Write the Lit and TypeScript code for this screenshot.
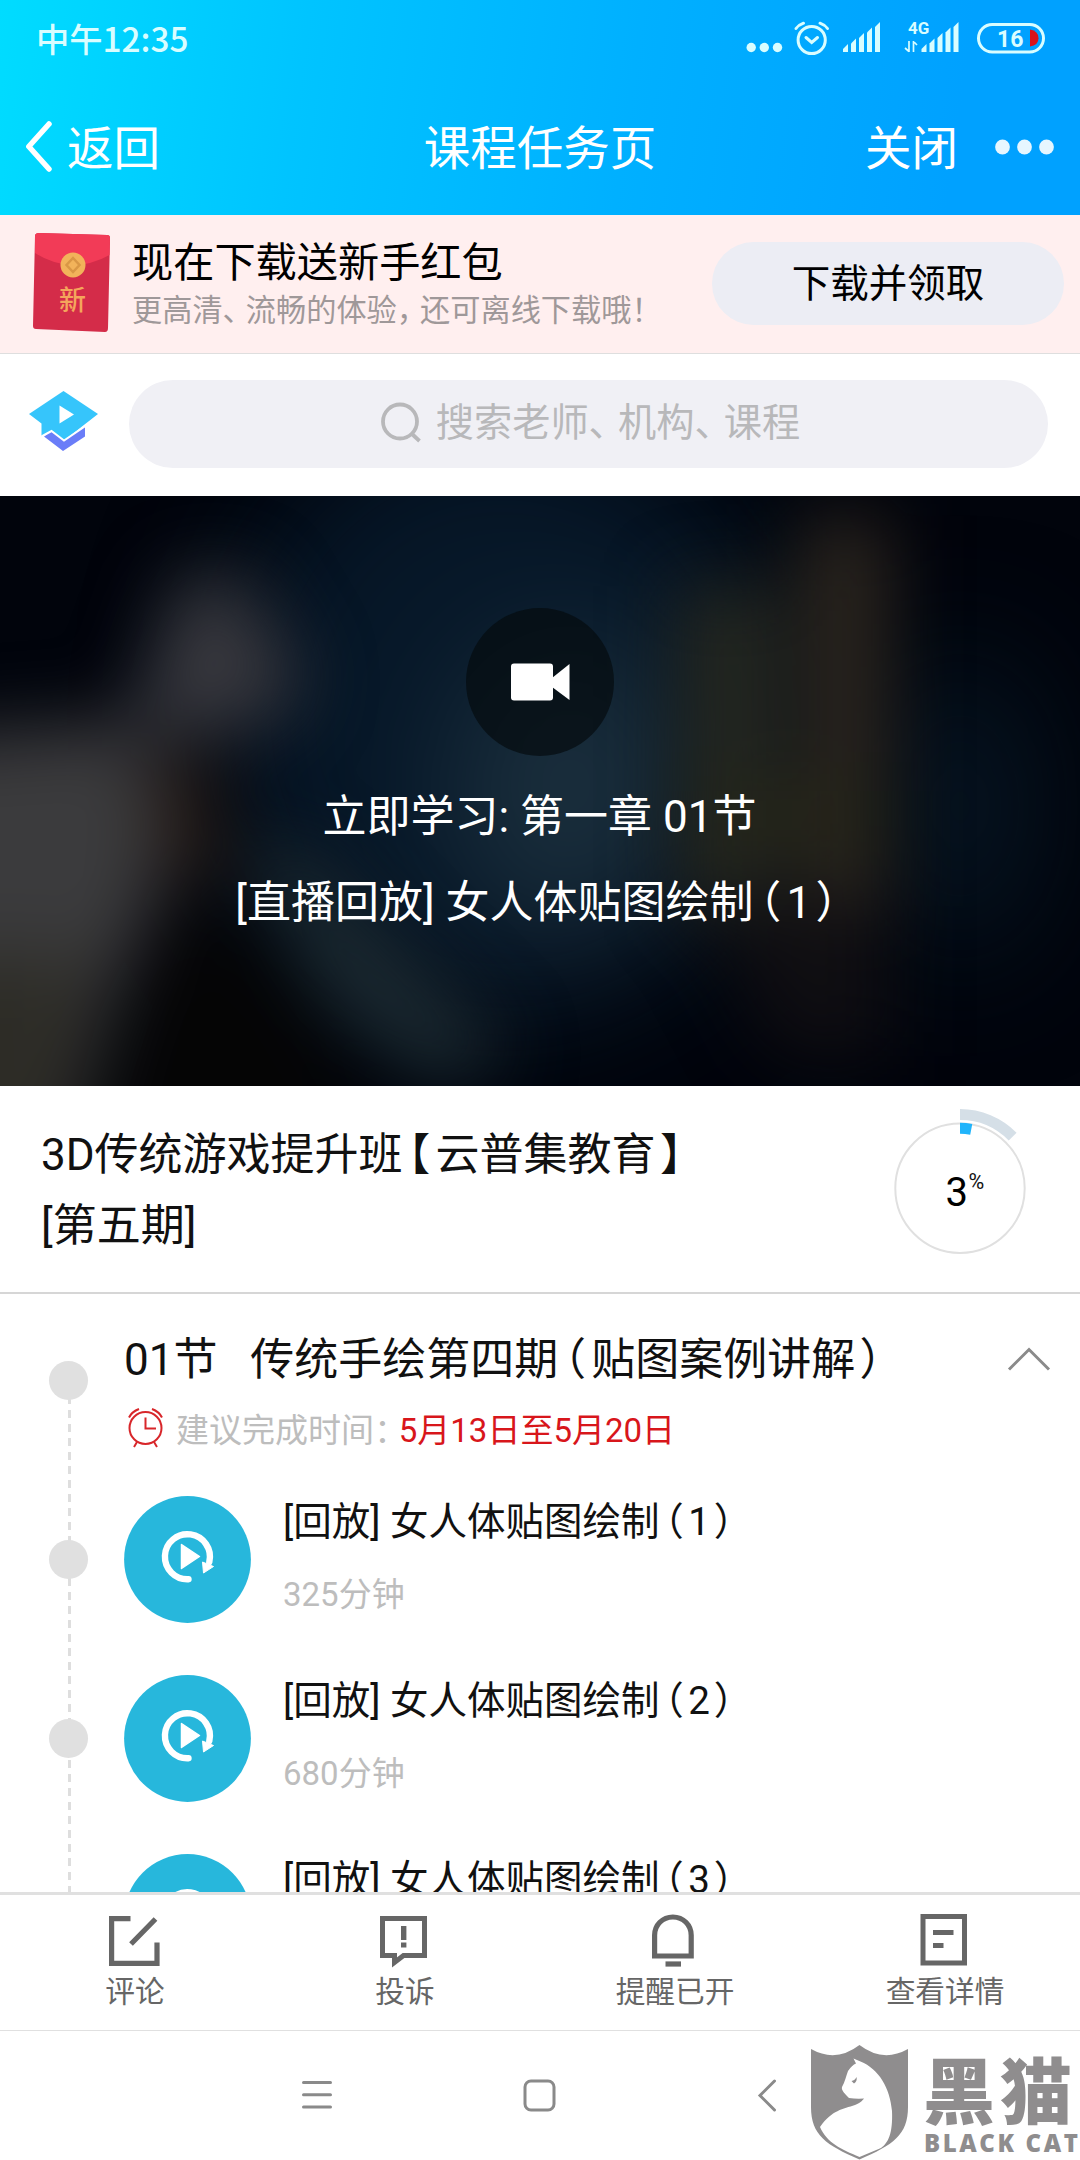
import { LitElement, html, css, svg, TemplateResult } from 'lit';
import { property, customElement, state } from 'lit/decorators.js';
import { classMap } from 'lit/directives/class-map.js';

interface Lesson {
  title: string;
  minutes: number;
}

interface Tab {
  label: string;
  icon: TemplateResult;
}

// Full-width punctuation is set tighter than one em, as on the phone
const PUNCT = /([、，：！（）【】])/;

function cjk(text: string) {
  return text.split(PUNCT).map((part) => {
    if (!PUNCT.test(part)) {
      return part;
    }
    const classes = {
      p: true,
      open: '（【'.includes(part),
      close: '）】'.includes(part),
      colon: part === '：',
    };
    return html`<span class=${classMap(classes)}>${part}</span>`;
  });
}

const punctuation = css`
  .p {
    margin-right: -0.23em;
  }

  .p.open {
    margin-left: -0.37em;
    margin-right: 0.12em;
  }

  .p.close {
    margin-left: 0.1em;
    margin-right: -0.36em;
  }

  .p.colon {
    margin-left: 0.01em;
    margin-right: -0.26em;
  }
`;

const editIcon = html`
  <svg width="52" height="54" viewBox="0 0 52 54" fill="none" stroke="currentColor" stroke-width="5.2">
    <path d="M21.5 4.6H2.6V49.4H48V28.5M22 30L46.5 5" />
  </svg>
`;

const complainIcon = html`
  <svg width="52" height="54" viewBox="0 0 52 54" fill="none" stroke="currentColor" stroke-width="5">
    <path d="M3.5 4.5H45.5V41.5H24.5L15.5 48.5V41.5H3.5Z" />
    <path d="M24.7 12V26M24.7 28.5V33.5" stroke-width="5.4" />
  </svg>
`;

const bellIcon = html`
  <svg width="52" height="54" viewBox="0 0 52 54" fill="none" stroke="currentColor" stroke-width="5.2">
    <path d="M5.6 42V21.3C5.6 11 13.5 3 23.9 3S42.2 11 42.2 21.3V42Z" />
    <path d="M16.5 50H32" />
  </svg>
`;

const detailIcon = html`
  <svg width="52" height="54" viewBox="0 0 52 54" fill="none" stroke="currentColor" stroke-width="5">
    <path d="M4 2.5H45.5V49H4ZM14 18.5H34.5M14 31.5H24.5" />
  </svg>
`;

/**
 * One replay lesson in the course outline
 * @element lesson-row
 *
 * @prop {string} heading - Lesson title
 * @prop {number} minutes - Duration in minutes
 */
@customElement('lesson-row')
export class LessonRow extends LitElement {
  static override styles = [punctuation, css`
    :host {
      display: flex;
      align-items: flex-start;
      height: 179px;
    }

    .dot {
      width: 39px;
      height: 39px;
      margin: 44px 36px 0 49px;
      border-radius: 50%;
      background: #e0e0e0;
    }

    .play {
      width: 127px;
      height: 127px;
      margin-right: 32px;
    }

    .heading {
      margin-top: 1px;
      font-size: 38.5px;
      line-height: 50px;
      color: #111;
      white-space: nowrap;
    }

    .minutes {
      margin-top: 23px;
      font-size: 33px;
      line-height: 50px;
      color: #bdbdbd;
    }
  `];

  @property({ type: String })
  heading = '';

  @property({ type: Number })
  minutes = 0;

  override render() {
    return html`
      <span class="dot"></span>
      <svg class="play" viewBox="0 0 127 127">
        <circle cx="63.5" cy="63.5" r="63.4" fill="#27b7dc" />
        <path d="M64.5 83.2A22.5 22.5 0 1 1 85.3 66" fill="none" stroke="#fff" stroke-width="6.4" stroke-linecap="round" />
        <path d="M78.5 66L89.5 70.5L79.5 77Z" fill="#fff" stroke="#fff" stroke-width="1" />
        <path d="M57.5 48.5L75.5 60.5L57.5 72.5Z" fill="#fff" stroke="#fff" stroke-width="1.5" stroke-linejoin="round" />
      </svg>
      <div>
        <div class="heading">${cjk(this.heading)}</div>
        <div class="minutes">${this.minutes}分钟</div>
      </div>
    `;
  }
}

@customElement('app-root')
export class AppRoot extends LitElement {
  static override styles = [punctuation, css`
    :host {
      display: flex;
      flex-direction: column;
      position: relative;
      width: 1080px;
      height: 2160px;
      overflow: hidden;
      background: #fff;
      color: #111;
      font-family: Roboto, 'Noto Sans CJK SC', sans-serif;
    }

    svg {
      display: block;
      flex: none;
    }

    /* Header */
    .top {
      flex: none;
      height: 215px;
      color: #fff;
      background: linear-gradient(98deg, #00dcff 0%, #00c4ff 28%, #00b0ff 58%, #00a1ff 88%);
    }

    .status {
      display: flex;
      justify-content: space-between;
      align-items: center;
      height: 78px;
      padding: 0 32px 0 36px;
      color: #d9fdff;
    }

    .clock {
      padding-bottom: 3px;
      font-family: 'Noto Sans CJK SC', sans-serif;
      font-weight: 500;
      font-size: 33.3px;
    }

    .nav {
      display: grid;
      grid-template-columns: 1fr auto 1fr;
      align-items: center;
      height: 137px;
      padding: 0 26px;
      font-size: 46.5px;
    }

    .label {
      padding-bottom: 5px;
    }

    .back,
    .actions {
      display: flex;
      align-items: center;
    }

    .back {
      gap: 13px;
    }

    .actions {
      justify-content: flex-end;
      gap: 36px;
    }

    /* Download promo */
    .promo {
      display: flex;
      flex: none;
      align-items: center;
      box-sizing: border-box;
      height: 139px;
      padding: 0 16px 4px 32px;
      border-bottom: 1px solid #dedede;
      background: #ffefef;
    }

    .promo-text {
      flex: 1;
      margin: 4px 0 0 21px;
      white-space: nowrap;
    }

    .promo-title {
      font-size: 41.2px;
      line-height: 54px;
      color: #000;
    }

    .promo-sub {
      font-size: 30.2px;
      line-height: 42px;
      color: #9f9899;
    }

    .promo-button {
      width: 352px;
      height: 83px;
      margin-top: 3px;
      padding: 0 0 8px;
      border: 0;
      border-radius: 42px;
      background: #ecedf4;
      color: #000;
      font: inherit;
      font-size: 38.5px;
    }

    /* Search */
    .search {
      display: flex;
      flex: none;
      align-items: center;
      box-sizing: border-box;
      height: 142px;
      padding: 0 32px 3px 28px;
      gap: 30px;
    }

    .logo {
      margin-bottom: 5px;
    }

    .search-box {
      display: flex;
      flex: 1;
      align-items: center;
      justify-content: center;
      height: 88px;
      gap: 14px;
      padding: 0 0 3px 3px;
      box-sizing: border-box;
      border-radius: 44px;
      background: #f0f0f5;
      color: #b8b8ba;
      font-size: 38.2px;
    }

    /* Player */
    .player {
      display: grid;
      flex: none;
      height: 590px;
      overflow: hidden;
      background: #01040c;
    }

    .player > * {
      grid-area: 1 / 1;
    }

    .player-body {
      display: flex;
      flex-direction: column;
      align-items: center;
      z-index: 1;
      padding: 112px 1px 0 0;
      color: #fff;
      font-size: 44px;
      line-height: 60px;
      white-space: nowrap;
    }

    .camera {
      display: flex;
      align-items: center;
      justify-content: center;
      width: 148px;
      height: 148px;
      margin-bottom: 31px;
      border-radius: 50%;
      background: rgba(4, 10, 14, 0.68);
    }

    .player-title {
      margin-top: 26px;
    }

    /* Course */
    .course {
      display: flex;
      flex: none;
      justify-content: space-between;
      box-sizing: border-box;
      height: 208px;
      padding: 0 40px 0 41px;
      border-bottom: 2px solid #d6d6d6;
    }

    .course-title {
      margin: 34px 0 0;
      font-size: 44px;
      font-weight: 400;
      line-height: 71px;
      white-space: nowrap;
    }

    .progress {
      margin-top: 15px;
    }

    /* Outline */
    .outline {
      flex: none;
      height: 598px;
      overflow: hidden;
      background: repeating-linear-gradient(#dedede 0 8px, transparent 8px 14px) 68px 88px / 3px 510px no-repeat;
    }

    .section {
      display: flex;
      align-items: flex-start;
      height: 202px;
    }

    .section-dot {
      width: 39px;
      height: 39px;
      margin: 67px 36px 0 49px;
      border-radius: 50%;
      background: #e0e0e0;
    }

    .section-main {
      flex: 1;
      padding-top: 38px;
      white-space: nowrap;
    }

    .section-title {
      font-size: 44px;
      line-height: 56px;
      white-space: pre;
    }

    .deadline {
      display: flex;
      align-items: center;
      height: 48px;
      margin-top: 16px;
      padding-left: 4px;
      font-size: 33px;
      color: #bdbdbd;
    }

    .deadline svg {
      margin-right: 13px;
    }

    .range {
      color: #d8161b;
    }

    .toggle {
      margin: 52px 29px 0 0;
    }

    .collapsed {
      transform: rotate(180deg);
    }

    /* Bottom tabs */
    .tabs {
      display: grid;
      flex: none;
      grid-template-columns: repeat(4, 1fr);
      box-sizing: border-box;
      height: 139px;
      border-top: 3px solid #e0e0e0;
      border-bottom: 1px solid #e0e0e0;
      background: #fff;
    }

    .tab {
      display: flex;
      flex-direction: column;
      align-items: center;
      padding-top: 19px;
      gap: 2px;
      font-size: 29.7px;
      line-height: 44px;
      color: #666;
    }

    .system {
      flex: 1;
      display: flex;
      align-items: flex-start;
      padding: 46px 0 0 301px;
      color: #8a8a8a;
    }

    .system svg:nth-child(2) {
      margin-left: 190px;
    }

    .system svg:nth-child(3) {
      margin-left: 200px;
    }

    /* Stamp over the system bar */
    .stamp {
      position: absolute;
      right: 0;
      bottom: 0;
      display: flex;
      width: 270px;
      height: 116px;
      color: #8f8d8e;
    }

    .stamp-text {
      display: flex;
      flex-direction: column;
      margin-left: 14px;
      white-space: nowrap;
    }

    .stamp-zh {
      font-family: 'Noto Sans CJK SC', sans-serif;
      font-weight: 900;
      font-size: 72px;
      line-height: 86px;
      letter-spacing: 5px;
    }

    .stamp-en {
      margin-left: 1px;
      font-family: 'Open Sans', sans-serif;
      font-weight: 800;
      font-size: 24px;
      line-height: 26px;
      letter-spacing: 2.6px;
    }
  `];

  @property({ type: Number })
  progress = 3;

  @state()
  private expanded = true;

  private lessons: Lesson[] = [
    { title: '[回放] 女人体贴图绘制（1）', minutes: 325 },
    { title: '[回放] 女人体贴图绘制（2）', minutes: 680 },
    { title: '[回放] 女人体贴图绘制（3）', minutes: 540 },
  ];

  private tabs: Tab[] = [
    { label: '评论', icon: editIcon },
    { label: '投诉', icon: complainIcon },
    { label: '提醒已开', icon: bellIcon },
    { label: '查看详情', icon: detailIcon },
  ];

  private toggle() {
    this.expanded = !this.expanded;
  }

  // Arc clockwise from 12 o'clock around the ring's centre
  private arc(radius: number, degrees: number): string {
    const a = (degrees * Math.PI) / 180;
    const x = 69 + radius * Math.sin(a);
    const y = 87.3 - radius * Math.cos(a);
    return `M69 ${87.3 - radius}A${radius} ${radius} 0 0 1 ${x} ${y}`;
  }

  private renderStatus() {
    const bars = (x: number) => [0, 1, 2, 3, 4].map((i) => {
      const left = x + i * 8;
      const top = 46 - i * 5.5;
      return svg`<path d="M${left} ${top + 3}L${left + 5} ${top - 2}V52H${left}Z" fill="currentColor" />`;
    });
    return html`
      <div class="status">
        <span class="clock">中午12:35</span>
        <svg width="306" height="78" viewBox="742 0 306 78">
          <g fill="currentColor">
            <circle cx="751.2" cy="47.5" r="4.7" />
            <circle cx="764.3" cy="47.5" r="4.7" />
            <circle cx="777.5" cy="47.5" r="4.7" />
          </g>
          <g fill="none" stroke="currentColor" stroke-width="3" stroke-linecap="round">
            <circle cx="811.7" cy="40" r="13.6" />
            <path d="M806 37.5L811.7 42.5L817.5 37.5" />
            <path d="M796 28.5Q798.5 25 803.5 23.2M827.5 28.5Q825 25 820 23.2" />
          </g>
          ${bars(843)}
          <text x="908" y="33.5" font-size="17" font-weight="700" fill="currentColor">4G</text>
          <path d="M909 41V52M909 51.5L905 48M913.5 52V41M913.5 41.5L917 45" stroke="currentColor" stroke-width="1.7" fill="none" />
          ${bars(921.5)}
          <rect x="978.5" y="24.5" width="65" height="27.5" rx="13.7" fill="none" stroke="currentColor" stroke-width="3" />
          <path d="M1030 29.5Q1038.500 31 1038.5 38.2T1030 46.5Z" fill="#d9121b" />
          <text x="997" y="46.5" font-size="23" font-weight="700" fill="currentColor">16</text>
        </svg>
      </div>
    `;
  }

  private renderBackdrop() {
    return html`
      <svg width="1080" height="590" viewBox="0 0 1080 590">
        <defs>
          <filter id="soft" filterUnits="userSpaceOnUse" x="-200" y="-200" width="1480" height="990" color-interpolation-filters="sRGB">
            <feGaussianBlur stdDeviation="36" />
          </filter>
          <filter id="softer" filterUnits="userSpaceOnUse" x="-300" y="-300" width="1680" height="1190" color-interpolation-filters="sRGB">
            <feGaussianBlur stdDeviation="65" />
          </filter>
        </defs>
        <g filter="url(#softer)">
          <ellipse cx="500" cy="220" rx="280" ry="300" fill="#061728" />
          <ellipse cx="570" cy="290" rx="120" ry="150" fill="#1a2e3c" />
          <ellipse cx="960" cy="310" rx="70" ry="150" fill="#071725" />
        </g>
        <g filter="url(#soft)">
          <path d="M180 80H240L305 190L260 230L180 240L120 250Z" fill="#38383e" />
          <path d="M-80 240L120 225L165 300L160 400L115 500L70 660H-80Z" fill="#3b3b3d" />
          <path d="M-80 460H90L60 680H-80Z" fill="#2d2c26" />
          <path d="M155 260L215 265L225 390L175 390Z" fill="#241812" />
          <path d="M170 420L250 440L400 680H90Z" fill="#050505" />
          <path d="M240 350L300 350L410 460L510 560L440 590L330 510Z" fill="#1c2a31" />
          <path d="M680 90H775V410H680Z" fill="#25271f" />
          <path d="M800 20H890V410H800Z" fill="#2b251e" />
          <path d="M680 290H890V350H680Z" fill="#262619" />
          <path d="M700 410H890V560H780Z" fill="#0f0e12" />
        </g>
      </svg>
    `;
  }

  override render() {
    return html`
      <header class="top">
        ${this.renderStatus()}
        <nav class="nav">
          <span class="back">
            <svg width="28" height="52" viewBox="0 0 28 52" fill="none" stroke="#fff" stroke-width="5.5" stroke-linecap="round" stroke-linejoin="round">
              <path d="M23 3L2.8 25.5L23 48" />
            </svg>
            <span class="label">返回</span>
          </span>
          <span class="label">课程任务页</span>
          <span class="actions">
            <span class="label">关闭</span>
            <svg width="60" height="16" viewBox="0 0 60 16" fill="#fff" fill-opacity="0.9">
              <circle cx="8.5" cy="8" r="7.4" />
              <circle cx="30.5" cy="8" r="7.4" />
              <circle cx="52.5" cy="8" r="7.4" />
            </svg>
          </span>
        </nav>
      </header>

      <section class="promo">
        <svg width="79" height="102" viewBox="0 0 79 102">
          <path d="M7 2L75 4Q78 4 78 7L76 97Q76 101 73 101L4 98Q1 98 1 95L3 5Q3 2 7 2Z" fill="#d42c49" />
          <path d="M7 2L75 4Q78 4 78 7L77.5 24Q60 34 40 34Q20 33 3 22L3 5Q3 2 7 2Z" fill="#f23b57" />
          <circle cx="41" cy="34" r="12.5" fill="#f2b35a" />
          <path d="M41 27L47.5 34L41 41L34.5 34Z" fill="none" stroke="#d99745" stroke-width="2.5" />
          <text x="27" y="78.5" font-size="27" font-weight="500" fill="#f4a65c">新</text>
        </svg>
        <div class="promo-text">
          <div class="promo-title">现在下载送新手红包</div>
          <div class="promo-sub">${cjk('更高清、流畅的体验，还可离线下载哦！')}</div>
        </div>
        <button class="promo-button">下载并领取</button>
      </section>

      <section class="search">
        <svg class="logo" width="71" height="62" viewBox="0 0 71 62">
          <path d="M35 61L16 46.5L24 40L36 50L57 36V46.5Z" fill="#6a7df8" />
          <path d="M35.5 1L70 24L36 50.5L24 41.5L13.5 46V33.5L1 24Z" fill="#36c5fb" />
          <path d="M13.5 46.5L23.5 41L36 50.5L57.5 36" fill="none" stroke="#fff" stroke-width="2" />
          <path d="M31.5 15.5L46 24.5L31.5 33.5Z" fill="#fff" />
        </svg>
        <div class="search-box">
          <svg width="42" height="42" viewBox="0 0 42 42" fill="none" stroke="currentColor" stroke-width="3.8">
            <circle cx="20" cy="20.5" r="17" />
            <path d="M31.5 32.5L39.5 40" />
          </svg>
          <span class="label">${cjk('搜索老师、机构、课程')}</span>
        </div>
      </section>

      <section class="player">
        ${this.renderBackdrop()}
        <div class="player-body">
          <span class="camera">
            <svg width="60" height="38" viewBox="0 0 60 38" fill="#fff">
              <rect x="1" y="0.5" width="42" height="37" rx="3" />
              <path d="M42 15L59.5 1V37L42 24Z" />
            </svg>
          </span>
          <div>立即学习: 第一章 01节</div>
          <div class="player-title">${cjk('[直播回放] 女人体贴图绘制（1）')}</div>
        </div>
      </section>

      <section class="course">
        <h1 class="course-title">${cjk('3D传统游戏提升班【云普集教育】')}<br />[第五期]</h1>
        <svg class="progress" width="149" height="160" viewBox="0 0 149 160" fill="none">
          <circle cx="69" cy="87.3" r="64.7" stroke="#e0e0e0" stroke-width="2" />
          <path d=${this.arc(73.8, 45.5)} stroke="#d5dfe7" stroke-width="11" />
          <path d=${this.arc(60, this.progress * 3.6)} stroke="#21b4fb" stroke-width="11" />
          <text x="54.5" y="104.5" font-size="40" fill="#000">${this.progress}</text>
          <text x="77.5" y="87.5" font-size="21.5" fill="#111">%</text>
        </svg>
      </section>

      <section class="outline">
        <div class="section">
          <span class="section-dot"></span>
          <div class="section-main">
            <div class="section-title">${cjk('01节   传统手绘第四期（贴图案例讲解）')}</div>
            <div class="deadline">
              <svg width="35" height="40" viewBox="0 0 35 40" fill="none" stroke="#d8262a" stroke-width="2">
                <circle cx="17.5" cy="20" r="16" />
                <path d="M17.5 9.5V20.5H28M9 34L6 39M26 34L29 39" />
                <path d="M1 9.5Q4 3.5 11 1M34 9.5Q31 3.5 24 1" />
              </svg>
              <span>${cjk('建议完成时间：')}</span>
              <span class="range">5月13日至5月20日</span>
            </div>
          </div>
          <svg
            class=${classMap({ toggle: true, collapsed: !this.expanded })}
            width="44" height="26" viewBox="0 0 44 26"
            fill="none" stroke="#8a8a8a" stroke-width="3"
            @click=${this.toggle}
          >
            <path d="M2 23.5L22 3.5L42 23.5" />
          </svg>
        </div>
        ${this.expanded ? this.lessons.map((lesson) => html`
          <lesson-row .heading=${lesson.title} .minutes=${lesson.minutes}></lesson-row>
        `) : null}
      </section>

      <footer class="tabs">
        ${this.tabs.map((tab) => html`
          <div class="tab">
            ${tab.icon}
            <span>${tab.label}</span>
          </div>
        `)}
      </footer>

      <div class="system">
        <svg width="32" height="36" viewBox="0 0 32 36" fill="none" stroke="currentColor" stroke-width="3" stroke-linecap="round">
          <path d="M2.5 5.5H29.5M2.5 17.8H29.5M2.5 30H29.5" />
        </svg>
        <svg width="34" height="36" viewBox="0 0 34 36" fill="none" stroke="currentColor" stroke-width="3">
          <rect x="2" y="4" width="29" height="29" rx="6" />
        </svg>
        <svg width="22" height="36" viewBox="0 0 22 36" fill="none" stroke="currentColor" stroke-width="3" stroke-linecap="round">
          <path d="M17.5 4L3 18.5L17.5 33" />
        </svg>
      </div>

      <div class="stamp">
        <svg width="99" height="116" viewBox="0 0 99 116">
          <path d="M1 5Q26 19 49.5 1Q73 19 98 5V63C98 91 83 101 49.5 115.5C16 101 1 91 1 63Z" fill="currentColor" />
          <path d="M10 83C22 66 33 65 45 61C50 59 52 57 54 54.5Q46 55 39 54C35 50 31 46 32 43C35 38 36 32 38 27Q42 21 46 19.5L43.5 14.5L50.5 17.5C69 25 80 44 82 67C83 90 78 99 71 104L49.5 113C31 105 17 99 10 83Z" fill="#fff" />
          <path d="M41.5 37Q45 36.5 46.5 33Q47.5 37 44 39.5Z" fill="currentColor" />
        </svg>
        <div class="stamp-text">
          <span class="stamp-zh">黑猫</span>
          <span class="stamp-en">BLACK CAT</span>
        </div>
      </div>
    `;
  }
}

declare global {
  interface HTMLElementTagNameMap {
    'app-root': AppRoot;
    'lesson-row': LessonRow;
  }
}
